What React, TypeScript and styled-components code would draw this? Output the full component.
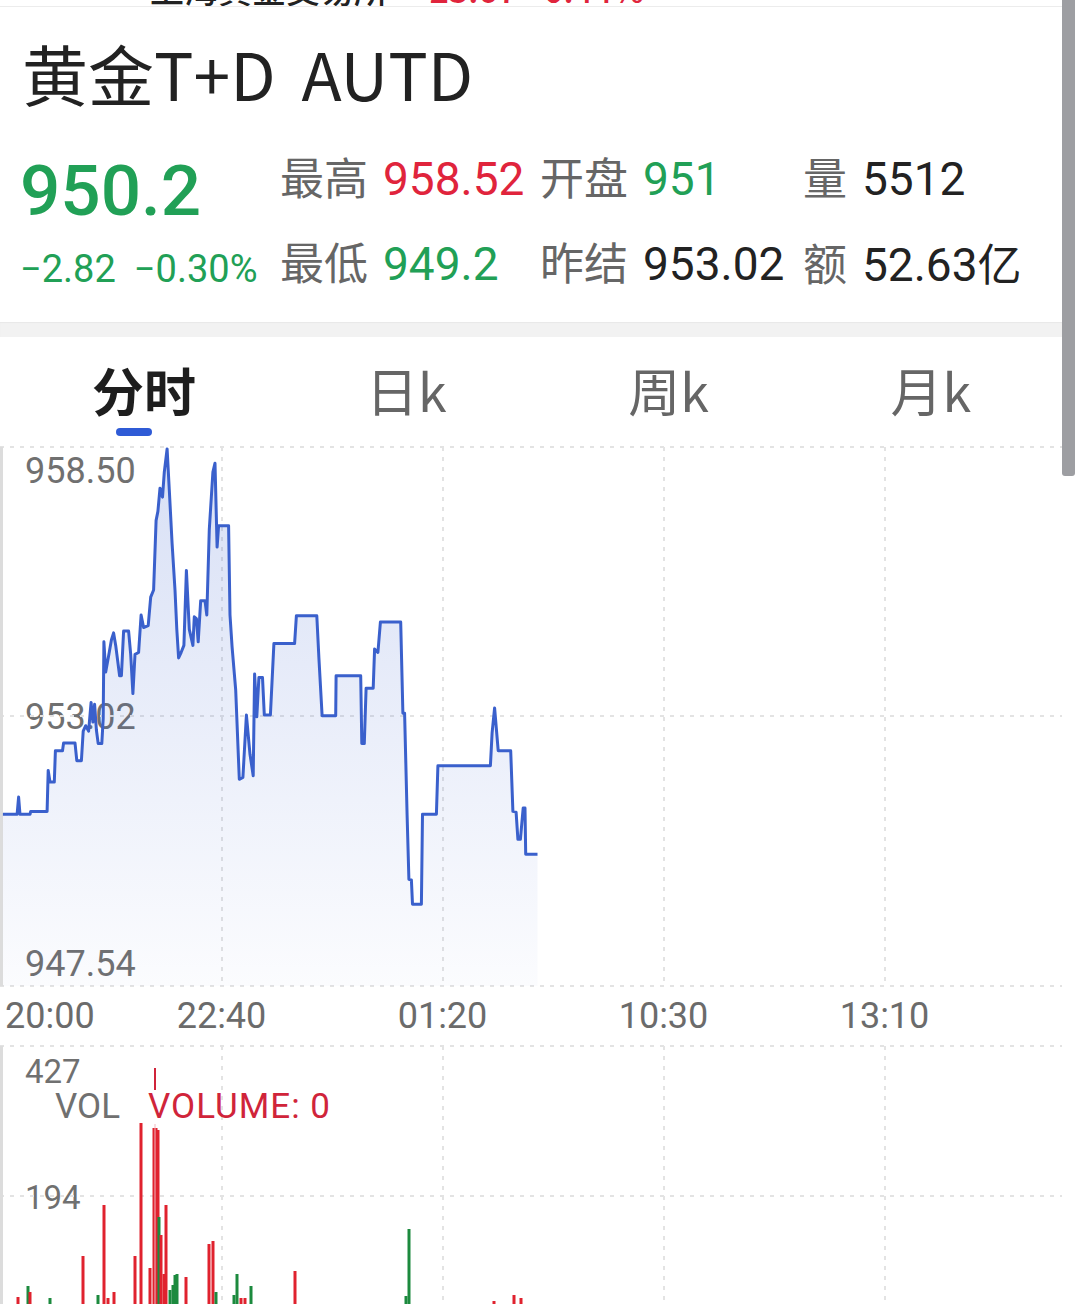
import React from "react";
import styled, { createGlobalStyle } from "styled-components";

const GlobalStyle = createGlobalStyle`
    body {
        margin: 0;
        background: #fff;
        font-family: Roboto, "Noto Sans CJK SC", sans-serif;
    }
`;

const GREEN = "#21a056";
const RED = "#e0243c";
const GRID = "#e3e3e3";
const GRID_X = [222, 443, 664, 885];

// minute line, traced from a 2.8x crop of the chart whose origin is (0, 440)
const TRACE: [number, number][] = [
    [8, 1048], [48, 1048], [52, 1000], [56, 1048], [84, 1048], [86, 1040], [132, 1040], [135, 925], [140, 958], [152, 958],
    [155, 870], [175, 870], [178, 848], [210, 848], [215, 898], [228, 898], [233, 815], [240, 800], [248, 815], [255, 735],
    [260, 790], [265, 740], [270, 812], [275, 850], [285, 850], [289, 780], [291, 565], [296, 650], [305, 600], [312, 560],
    [318, 540], [324, 575], [335, 660], [340, 660], [346, 535], [360, 535], [366, 600], [372, 710], [378, 600], [388, 595],
    [395, 490], [402, 525], [415, 520], [422, 440], [430, 420], [437, 225], [442, 200], [448, 135], [455, 160], [460, 90],
    [468, 25], [474, 140], [482, 290], [490, 420], [495, 530], [500, 610], [507, 595], [515, 575], [522, 365], [530, 530],
    [540, 575], [544, 495], [550, 500], [555, 565], [562, 450], [574, 450], [579, 490], [586, 250], [596, 90], [602, 65],
    [608, 300], [612, 240], [640, 240], [644, 490], [650, 580], [655, 640], [660, 700], [670, 950], [680, 945], [690, 770],
    [700, 880], [709, 940], [713, 655], [719, 775], [725, 665], [735, 665], [740, 770], [757, 770], [767, 570], [825, 570],
    [830, 492], [887, 492], [893, 610], [902, 772], [940, 772], [941, 660], [1010, 660], [1013, 850], [1020, 850], [1025, 695],
    [1045, 695], [1049, 585], [1058, 595], [1065, 510], [1122, 510], [1128, 765], [1133, 765], [1140, 1050], [1145, 1230], [1152, 1232],
    [1155, 1300], [1180, 1300], [1183, 1048], [1222, 1048], [1226, 912], [1373, 912], [1378, 820], [1385, 750], [1395, 870], [1430, 870],
    [1436, 1040], [1445, 1042], [1450, 1118], [1457, 1118], [1465, 1030], [1470, 1030], [1472, 1160], [1505, 1160],
];

const pricePoints = TRACE.map(([x, y]) => [x / 2.8, 440 + y / 2.8]);

// volume bars: x, top (page coords), up?
const VOLUMES: [number, number, boolean][] = [
    [18, 1297, true], [28, 1286, false], [30, 1292, true], [50, 1298, false], [83, 1256, true],
    [98, 1295, false], [104, 1205, true], [108, 1298, true], [114, 1292, true], [135, 1256, true],
    [141, 1123, true], [150, 1268, true], [154, 1128, true], [156, 1128, true], [158, 1130, true],
    [159, 1217, false], [161, 1235, true], [164, 1274, true], [166, 1205, true], [170, 1290, false],
    [173, 1285, false], [175, 1275, false], [177, 1274, false], [186, 1277, true], [209, 1244, true],
    [213, 1241, true], [216, 1292, false], [234, 1295, false], [237, 1274, false], [241, 1298, true],
    [245, 1298, true], [251, 1286, false], [295, 1271, true], [406, 1296, false], [409, 1229, false],
    [494, 1301, true], [514, 1295, true], [521, 1298, true],
];

const Page = styled.div`
    position: relative;
    width: 1080px;
    height: 1304px;
    overflow: hidden;
    background: #fff;
`;

const Content = styled.div`
    width: 1062px;
`;

const Scrollbar = styled.div`
    position: absolute;
    top: 0;
    left: 1062px;
    width: 13px;
    height: 476px;
    background: #9d9ea2;
    border-radius: 0 0 3px 3px;
`;

const TopStrip = styled.div`
    height: 6px;
    overflow: hidden;
    border-bottom: 1px solid #ececec;
    display: flex;
    gap: 22px;
    padding-left: 150px;
    font-family: "Noto Sans CJK SC", sans-serif;
    font-size: 34px;
    line-height: 34px;
`;

const StripText = styled.span<{ $color: string }>`
    margin-top: -28px;
    color: ${p => p.$color};
    font-weight: 500;
`;

const TitleRow = styled.div`
    box-sizing: border-box;
    height: 135px;
    padding: 32px 0 0 22px;
    display: flex;
    gap: 26px;
    font-family: "Noto Sans CJK SC", sans-serif;
    font-size: 66px;
    line-height: 66px;
    color: #222;
`;

const QuoteGrid = styled.div`
    display: grid;
    grid-template-columns: 260px 260px 263px auto;
    grid-template-rows: 83px 97px;
    padding-left: 20px;
    align-items: start;
`;

const Cell = styled.div<{ $top: number; $gap?: number }>`
    padding-top: ${p => p.$top}px;
    display: flex;
    align-items: baseline;
    gap: ${p => p.$gap ?? 15}px;
    white-space: nowrap;
`;

const BigPrice = styled.span`
    font-size: 71px;
    line-height: 71px;
    font-weight: 500;
    color: ${GREEN};
`;

const Change = styled.span`
    font-size: 38px;
    line-height: 38px;
    color: ${GREEN};
`;

const StatLabel = styled.span`
    font-family: "Noto Sans CJK SC", sans-serif;
    font-size: 44px;
    line-height: 44px;
    color: #666;
`;

const StatValue = styled.span<{ $color: string }>`
    font-size: 46px;
    line-height: 46px;
    color: ${p => p.$color};
`;

const Unit = styled.span`
    font-family: "Noto Sans CJK SC", sans-serif;
    font-size: 44px;
`;

const Band = styled.div`
    height: 15px;
    background: #f2f2f2;
    box-shadow: inset 0 1px 1px #e8e8e8;
`;

const TabBar = styled.div`
    height: 106px;
    display: flex;
    padding-left: 13px;
`;

const Tab = styled.div<{ $active: boolean }>`
    width: 265px;
    display: flex;
    flex-direction: column;
    align-items: center;
    padding-top: 26px;
    font-family: "Noto Sans CJK SC", sans-serif;
    font-size: 52px;
    line-height: 54px;
    font-weight: ${p => (p.$active ? 700 : 400)};
    color: ${p => (p.$active ? "#1e1e1e" : "#666")};
`;

const TabIndicator = styled.div`
    margin: 11px 20px 0 0;
    width: 36px;
    height: 8px;
    border-radius: 4px;
    background: #2f5bd6;
`;

const ChartBox = styled.div<{ $height: number }>`
    position: relative;
    height: ${p => p.$height}px;

    svg {
        position: relative;
        z-index: 1;
        display: block;
    }
`;

const AxisLabel = styled.span<{ $top: number; $size: number }>`
    position: absolute;
    left: 25px;
    top: ${p => p.$top}px;
    font-size: ${p => p.$size}px;
    line-height: ${p => p.$size}px;
    color: #707070;
`;

const Legend = styled.div`
    position: absolute;
    z-index: 2;
    left: 55px;
    top: 44px;
    display: flex;
    gap: 28px;
    font-size: 35px;
    line-height: 35px;
    color: #707070;
`;

const LegendValue = styled.span`
    color: #d0243a;
    letter-spacing: 1px;
`;

const TimeAxis = styled.div`
    height: 57px;
    display: flex;
    font-size: 36px;
    line-height: 57px;
    color: #6b6b6b;
`;

const TimeLabel = styled.span<{ $first?: boolean }>`
    width: ${p => (p.$first ? "106px" : "221px")};
    padding-left: ${p => (p.$first ? "5px" : "0")};
    text-align: ${p => (p.$first ? "left" : "center")};
`;

function GridLines({ top, bottom, rows }: { top: number; bottom: number; rows: number[] }) {
    return (
        <g stroke={GRID} strokeWidth={2} strokeDasharray="4 6">
            {GRID_X.map(x => (
                <line key={x} x1={x} x2={x} y1={top} y2={bottom} />
            ))}
            {rows.map(y => (
                <line key={y} x1={0} x2={1062} y1={y} y2={y} />
            ))}
            <line x1={1.5} x2={1.5} y1={top} y2={bottom} stroke="#dcdcdc" strokeWidth={3} strokeDasharray="none" />
        </g>
    );
}

function PriceChart() {
    const line = pricePoints.map(([x, y], i) => `${i ? "L" : "M"}${x.toFixed(1)},${y.toFixed(1)}`).join(" ");
    const last = pricePoints[pricePoints.length - 1];
    const area = `${line} L${last[0].toFixed(1)},986 L${pricePoints[0][0].toFixed(1)},986 Z`;

    return (
        <ChartBox $height={545}>
            <AxisLabel $top={10} $size={36}>958.50</AxisLabel>
            <AxisLabel $top={256} $size={36}>953.02</AxisLabel>
            <AxisLabel $top={503} $size={36}>947.54</AxisLabel>
            <svg width={1062} height={545} viewBox="0 443 1062 545">
                <defs>
                    <linearGradient id="priceFill" x1="0" y1="447" x2="0" y2="986" gradientUnits="userSpaceOnUse">
                        <stop offset="0" stopColor="#3b62cf" stopOpacity={0.2} />
                        <stop offset="1" stopColor="#3b62cf" stopOpacity={0.02} />
                    </linearGradient>
                </defs>
                <GridLines top={447} bottom={986} rows={[447, 716, 986]} />
                <path d={area} fill="url(#priceFill)" />
                <path d={line} fill="none" stroke="#3a60cc" strokeWidth={3} strokeLinejoin="round" />
            </svg>
        </ChartBox>
    );
}

function VolumeChart() {
    return (
        <ChartBox $height={259}>
            <AxisLabel $top={10} $size={33}>427</AxisLabel>
            <Legend>
                <span>VOL</span>
                <LegendValue>VOLUME: 0</LegendValue>
            </Legend>
            <AxisLabel $top={136} $size={33}>194</AxisLabel>
            <svg width={1062} height={259} viewBox="0 1045 1062 259">
                <GridLines top={1046} bottom={1304} rows={[1046, 1196]} />
                {VOLUMES.map(([x, top, up], i) => (
                    <rect key={i} x={x - 1.5} y={top} width={3} height={1304 - top} fill={up ? "#e0222e" : "#1c8a3e"} />
                ))}
                <line x1={155} x2={155} y1={1068} y2={1090} stroke="#d0243a" strokeWidth={2} />
                <line x1={155} x2={155} y1={1124} y2={1304} stroke="#f2b7be" strokeWidth={1} />
            </svg>
        </ChartBox>
    );
}

export default function App() {
    return (
        <Page>
            <GlobalStyle />
            <Content>
                <TopStrip>
                    <StripText $color="#222">上海黄金交易所</StripText>
                    <StripText $color={RED}>+23.67 +0.44%</StripText>
                </TopStrip>
                <TitleRow>
                    <span>黄金T+D</span>
                    <span>AUTD</span>
                </TitleRow>
                <QuoteGrid>
                    <Cell $top={13}><BigPrice>950.2</BigPrice></Cell>
                    <Cell $top={12}><StatLabel>最高</StatLabel><StatValue $color={RED}>958.52</StatValue></Cell>
                    <Cell $top={12}><StatLabel>开盘</StatLabel><StatValue $color={GREEN}>951</StatValue></Cell>
                    <Cell $top={12}><StatLabel>量</StatLabel><StatValue $color="#222">5512</StatValue></Cell>
                    <Cell $top={25} $gap={18}><Change>−2.82</Change><Change>−0.30%</Change></Cell>
                    <Cell $top={14}><StatLabel>最低</StatLabel><StatValue $color={GREEN}>949.2</StatValue></Cell>
                    <Cell $top={14}><StatLabel>昨结</StatLabel><StatValue $color="#222">953.02</StatValue></Cell>
                    <Cell $top={14}><StatLabel>额</StatLabel><StatValue $color="#222">52.63<Unit>亿</Unit></StatValue></Cell>
                </QuoteGrid>
                <Band />
                <TabBar>
                    {["分时", "日k", "周k", "月k"].map((name, i) => (
                        <Tab key={name} $active={i === 0}>
                            {name}
                            {i === 0 && <TabIndicator />}
                        </Tab>
                    ))}
                </TabBar>
                <PriceChart />
                <TimeAxis>
                    <TimeLabel $first>20:00</TimeLabel>
                    <TimeLabel>22:40</TimeLabel>
                    <TimeLabel>01:20</TimeLabel>
                    <TimeLabel>10:30</TimeLabel>
                    <TimeLabel>13:10</TimeLabel>
                </TimeAxis>
                <VolumeChart />
            </Content>
            <Scrollbar />
        </Page>
    );
}
